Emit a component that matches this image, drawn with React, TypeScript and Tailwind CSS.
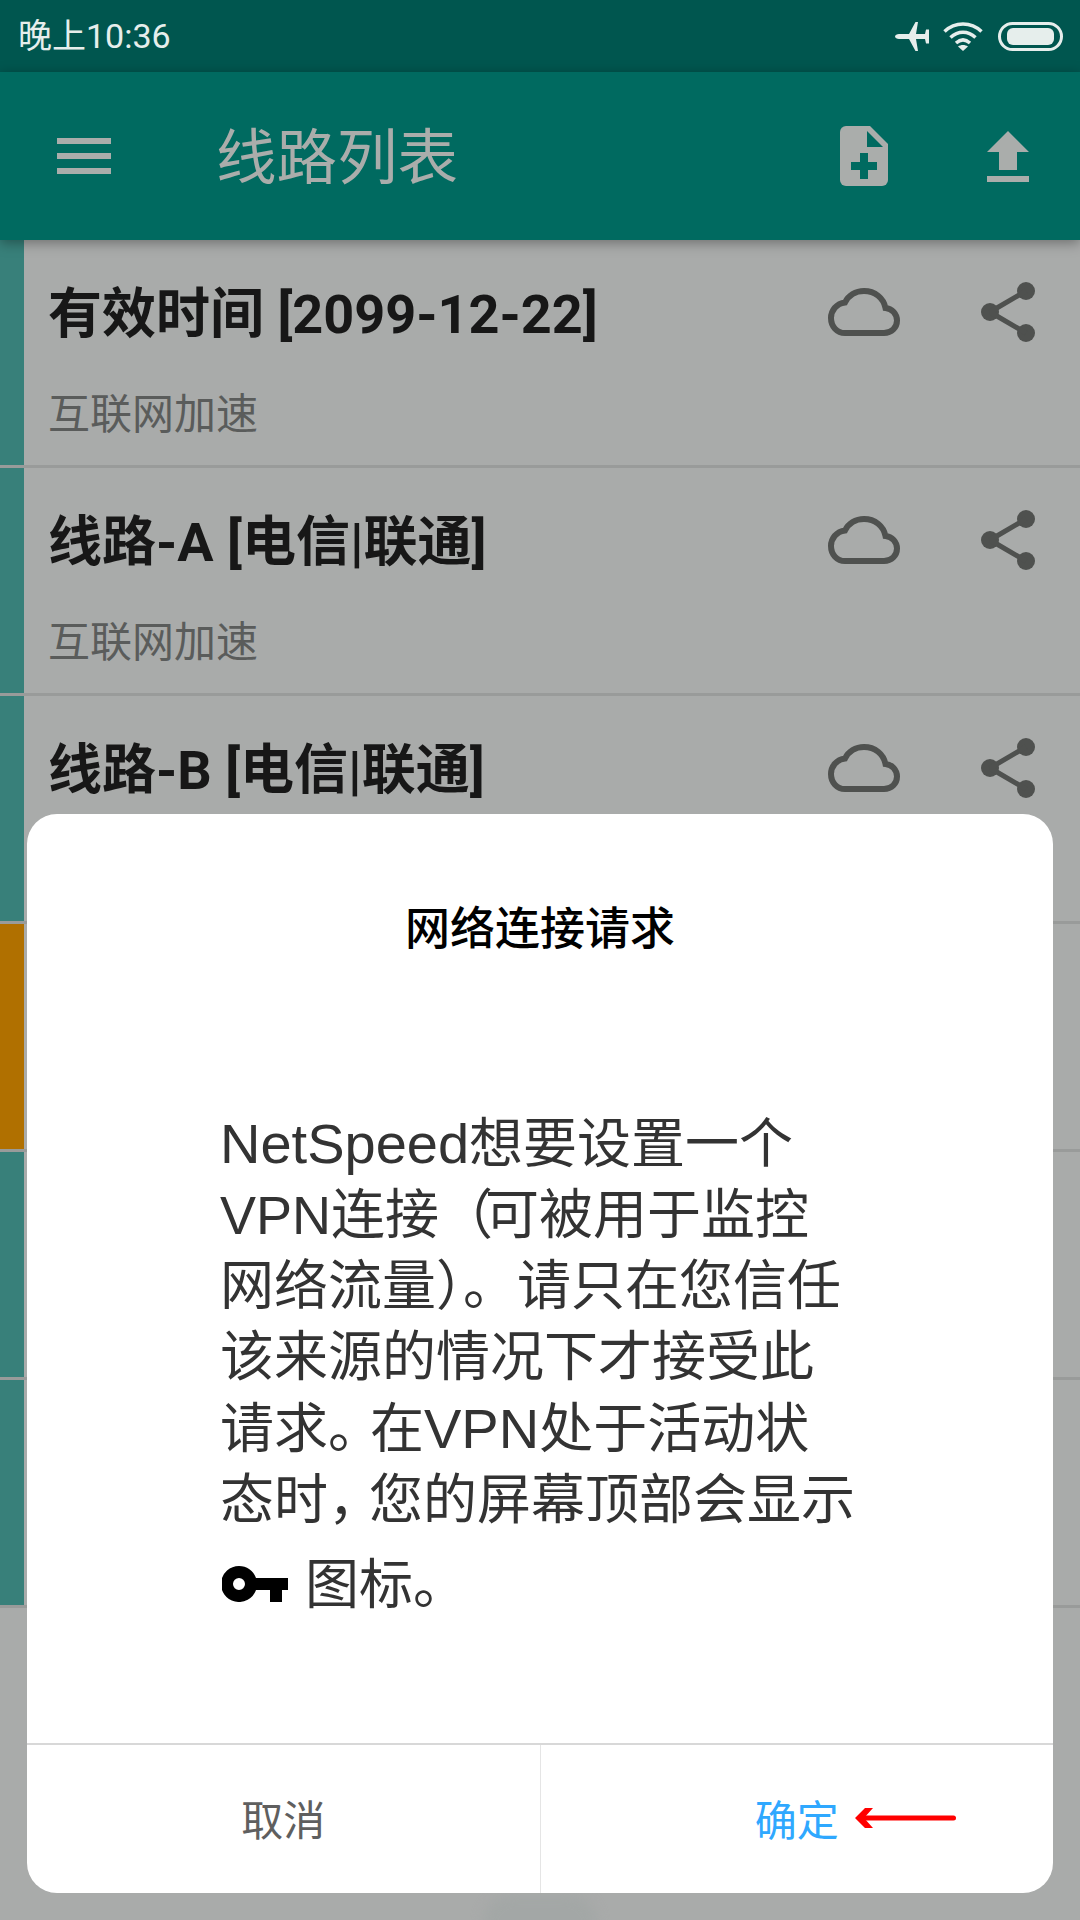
import React from 'react';

const cjk = "font-['Roboto','Noto_Sans_CJK_SC',sans-serif]";

interface Row {
  title: string;
  accent: string;
}

const rows: Row[] = [
  { title: '有效时间 [2099-12-22]', accent: 'bg-[#38807a]' },
  { title: '线路-A [电信|联通]', accent: 'bg-[#38807a]' },
  { title: '线路-B [电信|联通]', accent: 'bg-[#38807a]' },
  { title: '线路-C [电信|联通]', accent: 'bg-[#b07000]' },
  { title: '线路-D [电信|联通]', accent: 'bg-[#38807a]' },
  { title: '线路-E [电信|联通]', accent: 'bg-[#38807a]' },
];

function Cloud() {
  return (
    <svg width="72" height="48" viewBox="0 0 72 48" fill="none">
      <path
        d="M17 45h39c7.500 0 13-5.500 13-12.500 0-6.500-5-12-11.500-12.500C55.500 10 47 3 36 3 27.500 3 20.500 7.500 17 14.500 8.500 15.500 3 22.500 3 30c0 8.500 6 15 14 15z"
        stroke="#4f514f"
        strokeWidth="6"
      />
    </svg>
  );
}

function Share() {
  return (
    <svg width="54" height="60" viewBox="0 0 54 60" fill="#4f514f">
      <circle cx="45" cy="9" r="9" />
      <circle cx="9" cy="30" r="9" />
      <circle cx="45" cy="51" r="9" />
      <path d="M9 30 45 9M9 30l36 21" stroke="#4f514f" strokeWidth="5" />
    </svg>
  );
}

function ListRow({ row }: { row: Row }) {
  return (
    <div className="flex h-[228px] border-b-[3px] border-[#999b9a]">
      <div className={`w-6 ${row.accent}`} />
      <div className="relative flex-1 pl-[24px]">
        <div className={`${cjk} pt-[43px] text-[54px] leading-[64px] font-bold text-[#171717]`}>{row.title}</div>
        <div className={`${cjk} mt-[44px] text-[42px] leading-[48px] text-[#5a5c5b]`}>互联网加速</div>
        <div className="absolute right-[45px] top-[42px] flex items-center gap-[81px]">
          <Cloud />
          <Share />
        </div>
      </div>
    </div>
  );
}

export default function App() {
  return (
    <div className="relative h-[1920px] w-[1080px] overflow-hidden bg-[#a9abaa]">
      {/* Status bar */}
      <div className="flex h-[72px] items-center justify-between bg-[#00564f] pl-[18px] pr-[17px]">
        <span className={`${cjk} text-[34px] text-[#e6eeec]`}>晚上10:36</span>
        <div className="flex items-center">
          <svg width="34" height="29" viewBox="0 0 34 29" fill="#e6eeec">
            <path d="M0 14.500C0 13 2 12 4 12H14L20.500 0H23L21 12H30L31 7.500H34V21.500H31L30 17H21L23 29H20.500L14 17H4C2 17 0 16 0 14.500Z" />
          </svg>
          <svg className="ml-[14px]" width="40" height="29" viewBox="0 0 40 29" fill="none" stroke="#e6eeec" strokeWidth="3.500">
            <path d="M1.500 9.500C12 -0.500 28 -0.500 38.500 9.500M7.500 15.500c7.500-7 17.500-7 25 0M13 21c4.500-4 9.500-4 14 0" />
            <path d="M20 29l-5-4.500c3-2 7-2 10 0z" fill="#e6eeec" stroke="none" />
          </svg>
          <div className="ml-[15px] flex h-[29px] w-[65px] items-center rounded-full border-[3px] border-[#e6eeec] px-[6px] py-[3px]">
            <div className="h-full w-full rounded-[6px] bg-[#e6eeec]" />
          </div>
        </div>
      </div>

      {/* Toolbar */}
      <div className="relative z-10 flex h-[168px] items-center bg-[#006a60] pl-[57px] pr-[51px] shadow-[0_3px_12px_rgba(0,0,0,0.35)]">
        <div className="flex w-[54px] flex-col gap-[9px]">
          <div className="h-[6px] bg-[#aaadab]" />
          <div className="h-[6px] bg-[#aaadab]" />
          <div className="h-[6px] bg-[#aaadab]" />
        </div>
        <span className={`${cjk} ml-[105px] flex-1 pt-[7px] text-[60.500px] text-[#aaadab]`}>线路列表</span>
        <svg width="48" height="60" viewBox="0 0 48 60">
          <path
            d="M6 0h24l18 18v36a6 6 0 0 1-6 6H6a6 6 0 0 1-6-6V6a6 6 0 0 1 6-6z"
            fill="#aaadab"
          />
          <path d="M27 5v16h16zM20 27h8v9h9v8h-9v9h-8v-9h-9v-8h9z" fill="#006a60" />
        </svg>
        <svg className="ml-[99px]" width="42" height="51" viewBox="0 0 42 51" fill="#aaadab">
          <path d="M21 0l21 21H30v18H12V21H0zM0 45h42v6H0z" />
        </svg>
      </div>

      {/* Server list */}
      <div>
        {rows.map((row) => (
          <ListRow key={row.title} row={row} />
        ))}
      </div>

      {/* Hidden FAB behind the dialog */}
      <div className="absolute bottom-[-34px] left-[483px] h-[60px] w-[114px] rounded-full bg-[#a3a7a6] blur-[6px]" />

      {/* VPN dialog */}
      <div className="absolute left-[27px] top-[814px] flex h-[1079px] w-[1026px] flex-col rounded-[30px] bg-white">
        <div className={`${cjk} pt-[87px] text-center text-[45px] leading-[58px] font-medium text-black`}>网络连接请求</div>
        <div className="flex-1 whitespace-nowrap pl-[193px] pt-[149px] font-['Liberation_Sans','Noto_Sans_CJK_SC',sans-serif] text-[54px] leading-[71px] text-[#333]">
          <p><span className="text-[56px]">NetSpeed</span>想要设置一个</p>
          <p>VPN连接<span className="tracking-[-8px]">（</span>可被用于监控</p>
          <p>网络流量）。请只在您信任</p>
          <p>该来源的情况下才接受此</p>
          <p>请求<span className="tracking-[-12px]">。</span>在<span className="text-[56px]">VPN</span>处于活动状</p>
          <p>态时<span className="tracking-[-13px]">，</span>您的屏幕顶部会显示</p>
          <p className="mt-[14px] flex items-center">
            <svg className="ml-[2px] -mt-[4px]" width="66" height="36" viewBox="0 0 66 36" fill="#000">
              <path fillRule="evenodd" d="M17 0a18 18 0 0 1 17 12h32v12h-6v12H48V24H34A18 18 0 1 1 17 0zm0 12a6 6 0 1 0 0 12 6 6 0 0 0 0-12z" />
            </svg>
            <span className="ml-[17px]">图标。</span>
          </p>
        </div>
        <div className="flex h-[150px] border-t-2 border-[#d8d8d8]">
          <div className={`${cjk} flex flex-1 items-center justify-center border-r border-[#e5e5e5] pt-[4px] text-[42px] text-[#5f5f5f]`}>取消</div>
          <div className={`${cjk} relative flex flex-1 items-center justify-center pt-[4px] text-[42px] text-[#2fa8ff]`}>
            确定
            <svg className="absolute left-[314px] top-[63px]" width="102" height="20" viewBox="0 0 102 20" fill="#ff0000">
              <path d="M0 10 10 0h8l-9 10 9 10h-8z" />
              <rect x="7" y="7.500" width="94" height="5" rx="2.500" />
            </svg>
          </div>
        </div>
      </div>
    </div>
  );
}
